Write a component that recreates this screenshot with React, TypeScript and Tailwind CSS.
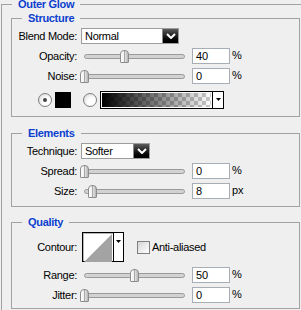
import type { ReactNode } from "react";

const fontCls = "font-['Liberation_Sans',Arial,sans-serif]";

function Legend({ children }: { children: ReactNode }) {
  return (
    <legend className="ml-[10px] px-[6px] h-[13px] leading-[13px] text-[11px] font-bold tracking-[-0.3px] text-[#0b3fd0]">
      {children}
    </legend>
  );
}

function Label({ children }: { children: ReactNode }) {
  return <div className="w-[65px] shrink-0 text-right leading-[14px] tracking-[-0.3px]">{children}</div>;
}

function Chevron() {
  return (
    <svg width="10" height="6" viewBox="0 0 10 6">
      <path d="M1 1 L5 5 L9 1" stroke="#fff" strokeWidth="2" fill="none" />
    </svg>
  );
}

function DownTri() {
  return (
    <svg width="5" height="3" viewBox="0 0 5 3">
      <polygon points="0,0 5,0 2.5,3" fill="#000" />
    </svg>
  );
}

function Dropdown({ value, width }: { value: string; width: string }) {
  return (
    <div className={`ml-[4px] h-[16px] flex border border-[#9d9d9d] bg-white ${width}`}>
      <div className="flex-1 pl-[3px] leading-[14px] tracking-[-0.3px]">{value}</div>
      <div className="w-[16px] flex items-center justify-center border-l border-[#8a8a8a] bg-gradient-to-b from-[#5c5c5c] to-[#000]">
        <Chevron />
      </div>
    </div>
  );
}

function Slider({ pos }: { pos: number }) {
  return (
    <div className="relative ml-[3px] w-[109px] h-[16px] shrink-0">
      <div className="absolute left-[4px] top-[6px] w-[101px] h-[5px] rounded-full border border-[#9a9a9a] bg-[#d2d2d2]" />
      <div
        className="absolute top-[2px] w-[9px] h-[13px] rounded-t-[4px] rounded-b-[1px] border border-[#8c8c8c] bg-gradient-to-r from-white via-[#ececec] to-[#b4b4b4] flex justify-center"
        style={{ left: pos }}
      >
        <div className="w-[1px] h-full bg-[#a8a8a8]" />
      </div>
    </div>
  );
}

function SliderRow({ label, pos, value, unit }: { label: string; pos: number; value: string; unit: string }) {
  return (
    <div className="flex items-center h-[16px]">
      <Label>{label}</Label>
      <Slider pos={pos} />
      <div className="ml-[3px] w-[38px] h-[16px] border border-[#a7aeb6] bg-white pl-[3px] leading-[14px]">{value}</div>
      <div className="ml-[2px] self-start leading-[14px]">{unit}</div>
    </div>
  );
}

function Radio({ checked }: { checked?: boolean }) {
  return (
    <div className="w-[14px] h-[14px] rounded-full border border-[#7d7d7d] bg-[radial-gradient(circle_at_65%_65%,#ffffff_35%,#cfcfcf_100%)] flex items-center justify-center">
      {checked && <div className="w-[4px] h-[4px] rounded-full bg-[#444]" />}
    </div>
  );
}

export default function App() {
  return (
    <div className={`w-[301px] h-[310px] overflow-hidden bg-[#efefef] pl-[1px] text-[11px] text-black ${fontCls}`}>
      <fieldset className="-mt-[2px] w-[320px] border border-[#a2a2a2] pb-4">
        <Legend>Outer Glow</Legend>

        {/* Structure */}
        <fieldset className="mt-[1px] ml-[9px] w-[289px] border border-[#a2a2a2]">
          <Legend>Structure</Legend>
          <div className="flex flex-col gap-[4px] pt-[3px] pb-[7px]">
            <div className="flex items-center h-[16px]">
              <Label>Blend Mode:</Label>
              <Dropdown value="Normal" width="w-[98px]" />
            </div>
            <SliderRow label="Opacity:" pos={40} value="40" unit="%" />
            <SliderRow label="Noise:" pos={0} value="0" unit="%" />
            <div className="mt-[3px] flex items-center h-[18px]">
              <div className="ml-[26px]">
                <Radio checked />
              </div>
              <div className="ml-[3px] w-[16px] h-[16px] bg-black" />
              <div className="ml-[12px]">
                <Radio />
              </div>
              <div className="ml-[3px] w-[124px] h-[18px] flex border border-black bg-white">
                <div className="flex-1 m-[1px] bg-[linear-gradient(to_right,#000,rgba(0,0,0,0)),conic-gradient(#c8c8c8_25%,#fff_0_50%,#c8c8c8_0_75%,#fff_0)] bg-[length:100%_100%,8px_8px]" />
                <div className="w-[11px] border-l border-black flex justify-center pt-[6px]">
                  <DownTri />
                </div>
              </div>
            </div>
          </div>
        </fieldset>

        {/* Elements */}
        <fieldset className="mt-[10px] ml-[9px] w-[289px] border border-[#a2a2a2]">
          <Legend>Elements</Legend>
          <div className="flex flex-col gap-[4px] pt-[3px] pb-[7px]">
            <div className="flex items-center h-[16px]">
              <Label>Technique:</Label>
              <Dropdown value="Softer" width="w-[69px]" />
            </div>
            <SliderRow label="Spread:" pos={0} value="0" unit="%" />
            <SliderRow label="Size:" pos={8} value="8" unit="px" />
          </div>
        </fieldset>

        {/* Quality */}
        <fieldset className="mt-[9px] ml-[9px] w-[289px] border border-[#a2a2a2]">
          <Legend>Quality</Legend>
          <div className="flex flex-col gap-[4px] pt-[3px] pb-[5px]">
            <div className="flex items-center h-[30px]">
              <Label>Contour:</Label>
              <div className="ml-[5px] w-[42px] h-[30px] flex border border-black bg-white">
                <div className="flex-1 border-t border-l border-[#b5b5b5]">
                  <svg width="28" height="28" viewBox="0 0 28 28" className="block">
                    <polygon points="0,28 28,0 28,28" fill="#a3a3a3" />
                  </svg>
                </div>
                <div className="w-[10px] border-l border-black flex justify-center pt-[7px]">
                  <DownTri />
                </div>
              </div>
              <div className="ml-[13px] w-[13px] h-[13px] border border-[#7f7f7f] bg-gradient-to-br from-[#d6d6d6] to-white" />
              <div className="ml-[2px] leading-[14px] tracking-[-0.3px]">Anti-aliased</div>
            </div>
            <div className="mt-[1px]">
              <SliderRow label="Range:" pos={50} value="50" unit="%" />
            </div>
            <SliderRow label="Jitter:" pos={0} value="0" unit="%" />
          </div>
        </fieldset>
      </fieldset>
    </div>
  );
}
